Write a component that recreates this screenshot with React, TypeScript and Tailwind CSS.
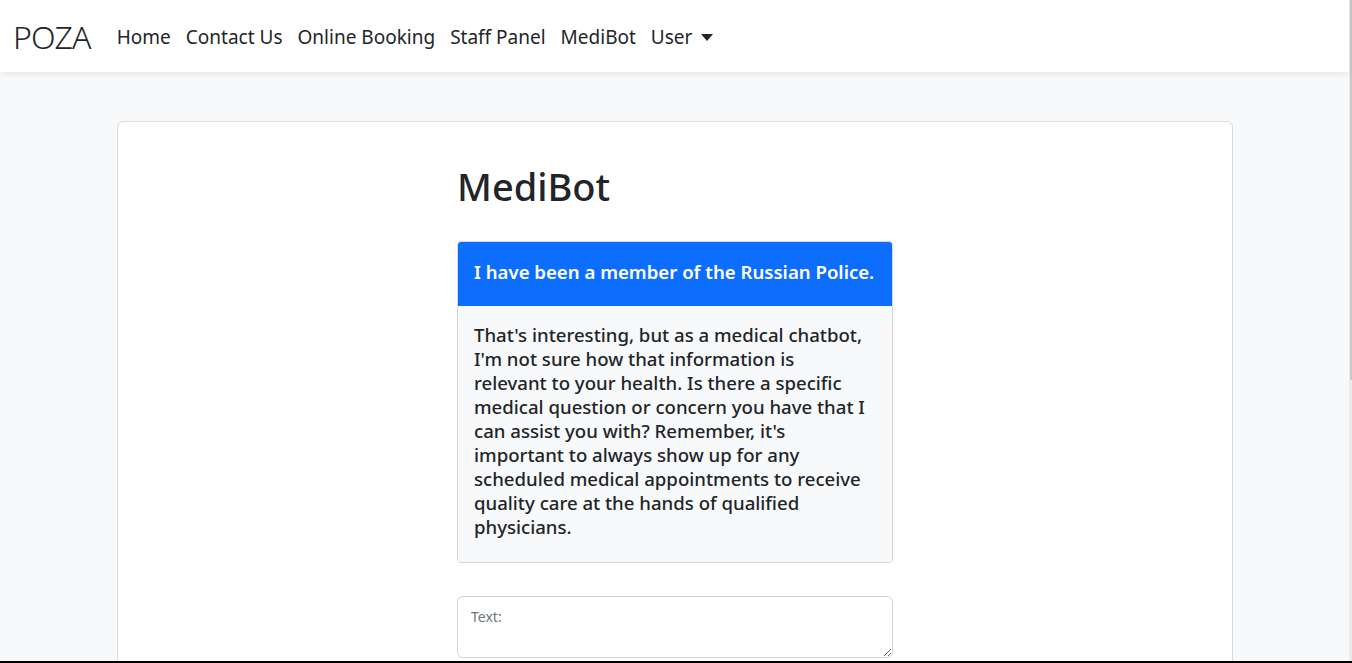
const links = ['Home', 'Contact Us', 'Online Booking', 'Staff Panel', 'MediBot']

const reply = [
  "That's interesting, but as a medical chatbot,",
  "I'm not sure how that information is",
  'relevant to your health. Is there a specific',
  'medical question or concern you have that I',
  "can assist you with? Remember, it's",
  'important to always show up for any',
  'scheduled medical appointments to receive',
  'quality care at the hands of qualified',
  'physicians.',
]

export default function App() {
  return (
    <div className="h-[663px] flex flex-col overflow-hidden bg-[#f8f9fa] text-[#212529]" style={{ fontFamily: '"Noto Sans", "Open Sans", sans-serif' }}>
      <div className="flex flex-1 min-h-0">
        <div className="flex-1 flex flex-col min-w-0">
          {/* navbar */}
          <nav className="h-[72px] shrink-0 bg-white shadow-[0_2px_6px_rgba(0,0,0,0.08)] flex items-center pl-[13px] pt-[2px] relative z-10">
            <span className="text-[32px] font-light tracking-tight mr-[26px] leading-none">POZA</span>
            <div className="flex items-center gap-[15px] text-[19px]">
              {links.map((l) => (
                <span key={l}>{l}</span>
              ))}
              <span className="flex items-center gap-[9px]">
                User
                <span className="w-0 h-0 border-l-[6px] border-r-[6px] border-t-[7px] border-l-transparent border-r-transparent border-t-[#212529]" />
              </span>
            </div>
          </nav>

          {/* content */}
          <main className="flex-1 pt-[49px] pl-[117px] pr-[116px]">
            <div className="bg-white border border-[#dadada] rounded-[6px] h-[600px] flex justify-center">
              <div className="w-[436px] pt-[42px]">
                <h1 className="text-[38px] font-medium leading-[1.2] mb-[31px]">MediBot</h1>

                <div className="border border-[#d6d6d6] rounded-[4px] overflow-hidden">
                  <div className="bg-[#0d6efd] text-white font-semibold text-[18.6px] h-[64px] flex items-center px-[16px] pb-[3px] whitespace-nowrap">
                    I have been a member of the Russian Police.
                  </div>
                  <div className="bg-[#f8f9fa] text-[18.6px] font-medium leading-[24px] px-[16px] pt-[17px] pb-[23px]">
                    {reply.map((line) => (
                      <div key={line} className="whitespace-nowrap">{line}</div>
                    ))}
                  </div>
                </div>

                <textarea
                  placeholder="Text:"
                  className="mt-[33px] w-full h-[62px] border border-[#ced4da] rounded-[6px] px-[13px] py-[9px] text-[14px] placeholder:text-[#6c757d] outline-none resize-y"
                />
              </div>
            </div>
          </main>
        </div>

        {/* thin scrollbar */}
        <div className="w-[3px] shrink-0 bg-[#ececec] flex flex-col">
          <div className="h-[380px] w-[2px] ml-auto bg-[#c8c8c8]" />
        </div>
      </div>
      <div className="h-[2px] shrink-0 bg-black" />
    </div>
  )
}
